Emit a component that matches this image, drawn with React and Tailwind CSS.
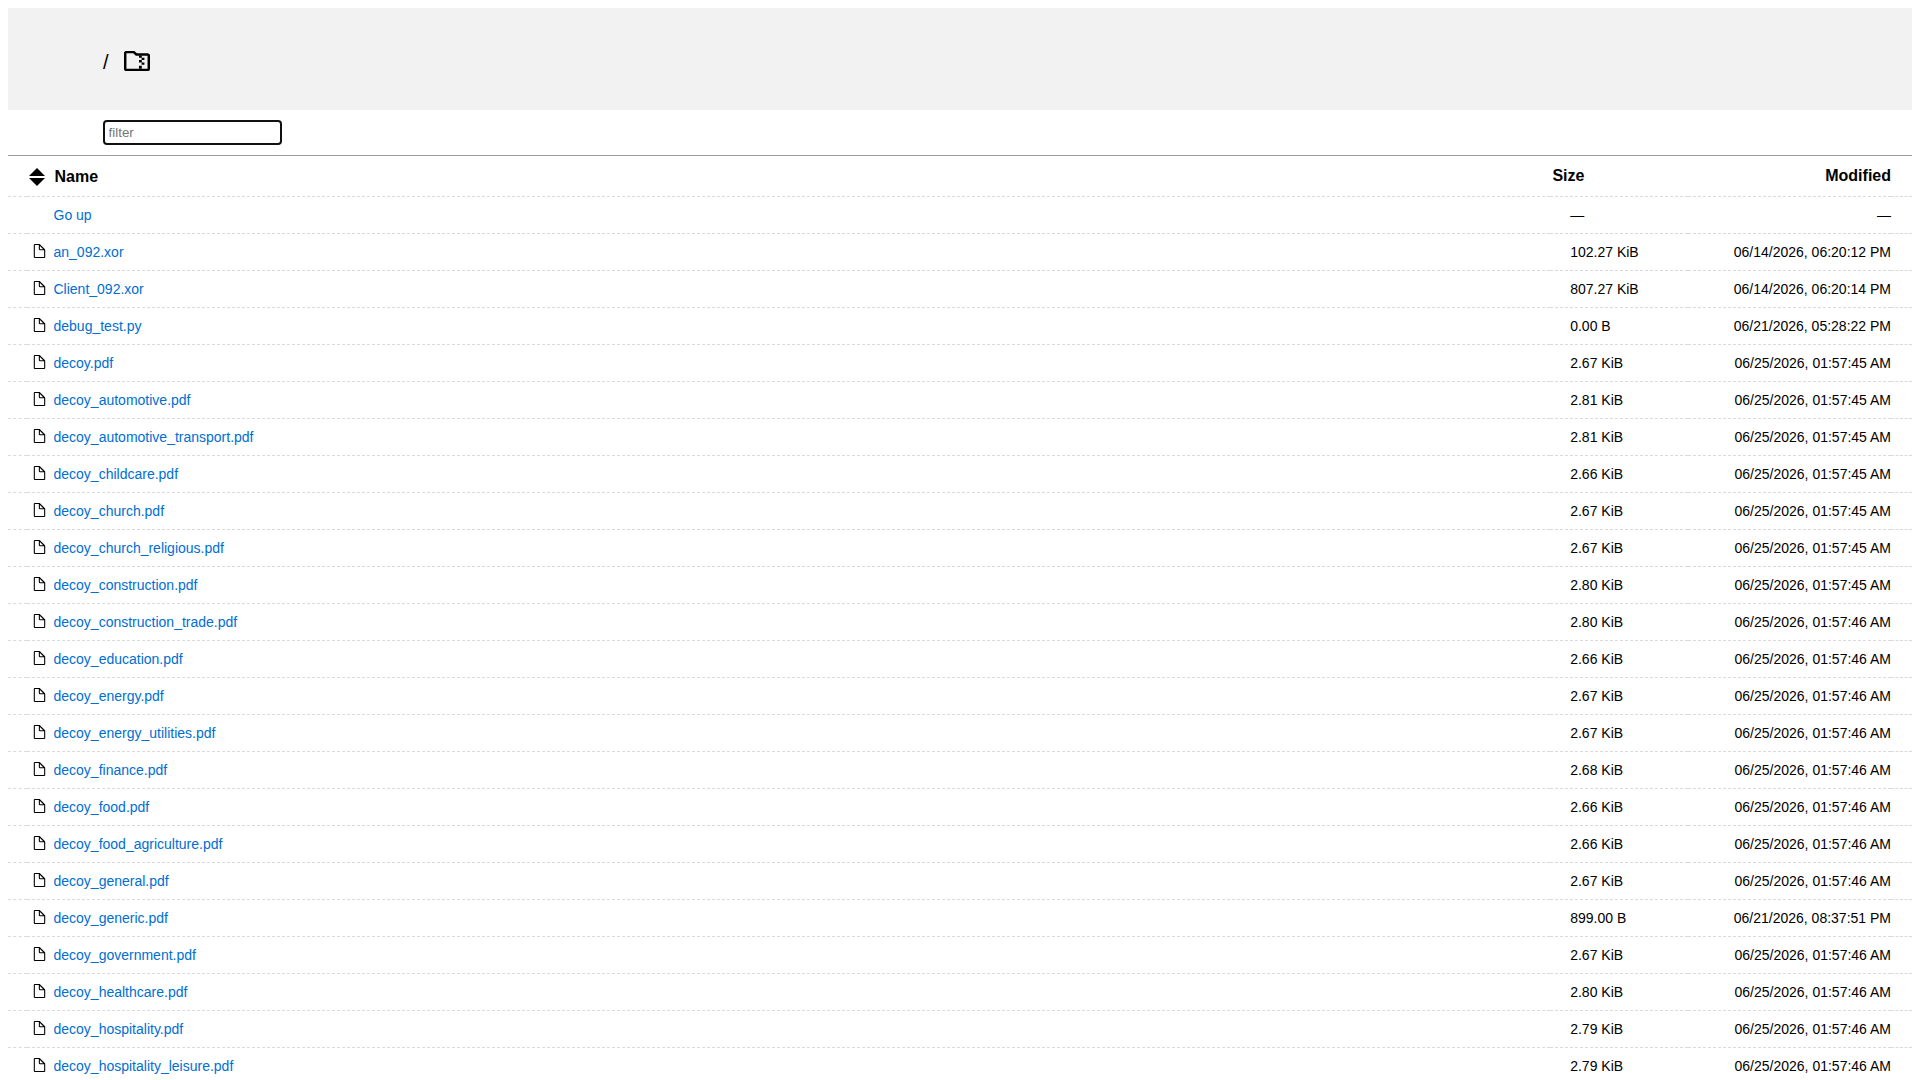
import React, { useState } from 'react';

const files = [
  { name: 'an_092.xor', size: '102.27 KiB', modified: '06/14/2026, 06:20:12 PM' },
  { name: 'Client_092.xor', size: '807.27 KiB', modified: '06/14/2026, 06:20:14 PM' },
  { name: 'debug_test.py', size: '0.00 B', modified: '06/21/2026, 05:28:22 PM' },
  { name: 'decoy.pdf', size: '2.67 KiB', modified: '06/25/2026, 01:57:45 AM' },
  { name: 'decoy_automotive.pdf', size: '2.81 KiB', modified: '06/25/2026, 01:57:45 AM' },
  { name: 'decoy_automotive_transport.pdf', size: '2.81 KiB', modified: '06/25/2026, 01:57:45 AM' },
  { name: 'decoy_childcare.pdf', size: '2.66 KiB', modified: '06/25/2026, 01:57:45 AM' },
  { name: 'decoy_church.pdf', size: '2.67 KiB', modified: '06/25/2026, 01:57:45 AM' },
  { name: 'decoy_church_religious.pdf', size: '2.67 KiB', modified: '06/25/2026, 01:57:45 AM' },
  { name: 'decoy_construction.pdf', size: '2.80 KiB', modified: '06/25/2026, 01:57:45 AM' },
  { name: 'decoy_construction_trade.pdf', size: '2.80 KiB', modified: '06/25/2026, 01:57:46 AM' },
  { name: 'decoy_education.pdf', size: '2.66 KiB', modified: '06/25/2026, 01:57:46 AM' },
  { name: 'decoy_energy.pdf', size: '2.67 KiB', modified: '06/25/2026, 01:57:46 AM' },
  { name: 'decoy_energy_utilities.pdf', size: '2.67 KiB', modified: '06/25/2026, 01:57:46 AM' },
  { name: 'decoy_finance.pdf', size: '2.68 KiB', modified: '06/25/2026, 01:57:46 AM' },
  { name: 'decoy_food.pdf', size: '2.66 KiB', modified: '06/25/2026, 01:57:46 AM' },
  { name: 'decoy_food_agriculture.pdf', size: '2.66 KiB', modified: '06/25/2026, 01:57:46 AM' },
  { name: 'decoy_general.pdf', size: '2.67 KiB', modified: '06/25/2026, 01:57:46 AM' },
  { name: 'decoy_generic.pdf', size: '899.00 B', modified: '06/21/2026, 08:37:51 PM' },
  { name: 'decoy_government.pdf', size: '2.67 KiB', modified: '06/25/2026, 01:57:46 AM' },
  { name: 'decoy_healthcare.pdf', size: '2.80 KiB', modified: '06/25/2026, 01:57:46 AM' },
  { name: 'decoy_hospitality.pdf', size: '2.79 KiB', modified: '06/25/2026, 01:57:46 AM' },
  { name: 'decoy_hospitality_leisure.pdf', size: '2.79 KiB', modified: '06/25/2026, 01:57:46 AM' },
];

const FileIcon = () => (
  <svg className="w-[21px] h-3.5 shrink-0 mb-[2px]" viewBox="0 0 265 323" fill="#fff" stroke="#000" strokeWidth="25" strokeLinecap="round" strokeLinejoin="round">
    <path d="M13 24.12v274.76c0 6.16 5.87 11.12 13.17 11.12H239c7.3 0 13.17-4.96 13.17-11.12V136.15S132.6 13 128.37 13H26.17C18.87 13 13 17.96 13 24.12z" />
    <path d="M129.37 13L129 113.9c0 10.58 7.26 19.1 16.27 19.1H249L129.37 13z" />
  </svg>
);

const SortIcon = () => (
  <svg className="w-4 h-[18px] shrink-0" viewBox="0 0 16 18">
    <path d="M8 0L16 8H0z" />
    <path d="M8 18L0 10h16z" />
  </svg>
);

const ZipFolderIcon = () => (
  <svg className="w-[26px] h-5" viewBox="0 0 26 20">
    <path d="M2.6 1.1h7.2l2.6 2.4h11a1.4 1.4 0 0 1 1.4 1.4v12.6a1.4 1.4 0 0 1-1.4 1.4H2.6a1.4 1.4 0 0 1-1.4-1.4v-15a1.4 1.4 0 0 1 1.4-1.4z" fill="none" stroke="#000" strokeWidth="2.5" strokeLinejoin="round" />
    <path d="M15 4.5h2.8v2.2H15zM17.6 6.7h2.8v2.4h-2.8zM15 9h2.8v2.4H15zM17.6 11.4h2.8v2.4h-2.8zM15 14.8h2.8v3H15z" />
  </svg>
);

const cell = 'border-b border-dashed border-[#dadada] p-0';

const App = () => {
  const [filter, setFilter] = useState('');

  const visible = files.filter((f) => f.name.toLowerCase().includes(filter.toLowerCase()));

  return (
    <div className="h-screen overflow-hidden bg-white p-2 text-black font-['Liberation_Sans',Arial,sans-serif]">
      {/* Breadcrumb */}
      <header className="flex h-[102px] items-center bg-[#f2f2f2] pl-[95px]">
        <h1 className="flex items-center pt-[3px] text-xl leading-6">
          <span className="w-[21px] pt-0.5">/</span>
          <a href="#">
            <ZipFolderIcon />
          </a>
        </h1>
      </header>

      {/* Filter */}
      <div className="flex h-[45px] items-center pl-[95px]">
        <input
          type="text"
          placeholder="filter"
          value={filter}
          onChange={(e) => setFilter(e.target.value)}
          className="h-[25px] w-[179px] rounded-[4px] border-2 border-[#101010] px-[3.6px] text-[13.333px] leading-4 outline-none placeholder:text-[#757575]"
        />
      </div>

      {/* Listing */}
      <table className="w-full table-fixed border-separate border-spacing-0 border-t border-[#9c9c9c]">
        <colgroup>
          <col className="w-[19px]" />
          <col />
          <col className="w-[138px]" />
          <col className="w-[203px]" />
          <col className="w-[21px]" />
        </colgroup>
        <thead>
          <tr className="h-[41px] text-base">
            <th className={cell}></th>
            <th className={cell}>
              <div className="flex items-center gap-[9.5px] pt-0.5 pl-0.5">
                <SortIcon />
                <span>Name</span>
              </div>
            </th>
            <th className={`${cell} text-left pl-[2.4px]`}>Size</th>
            <th className={`${cell} text-right`}>Modified</th>
            <th className={cell}></th>
          </tr>
        </thead>
        <tbody className="text-sm">
          <tr className="h-[37px]">
            <td className={cell}></td>
            <td className={cell}>
              <a href="#" className="pl-[26.5px] text-[#006ed3]">Go up</a>
            </td>
            <td className={`${cell} pl-[20.2px]`}>—</td>
            <td className={`${cell} text-right`}>—</td>
            <td className={cell}></td>
          </tr>
          {visible.map((f) => (
            <tr key={f.name} className="h-[37px]">
              <td className={cell}></td>
              <td className={cell}>
                <a href="#" className="flex items-center gap-[3.5px] pl-0.5 text-[#006ed3]">
                  <FileIcon />
                  <span>{f.name}</span>
                </a>
              </td>
              <td className={`${cell} pl-[20.2px]`}>{f.size}</td>
              <td className={`${cell} text-right`}>{f.modified}</td>
              <td className={cell}></td>
            </tr>
          ))}
        </tbody>
      </table>
    </div>
  );
};

export default App;
